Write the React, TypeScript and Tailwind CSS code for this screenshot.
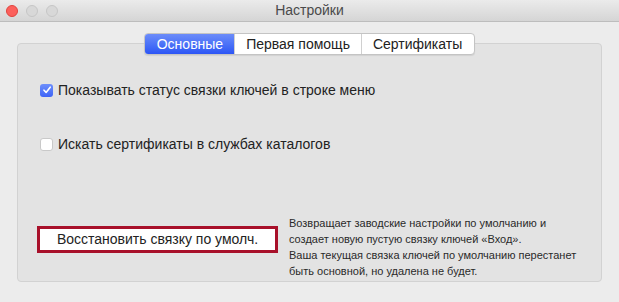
import React from "react";

const font = { fontFamily: '"Liberation Sans", Arial, sans-serif' };

function TrafficLights() {
  return (
    <div className="flex items-center gap-[8px] pl-[6px]">
      <span className="h-[12px] w-[12px] rounded-full border border-[#e0443e] bg-[#fc605c]" />
      <span className="h-[12px] w-[12px] rounded-full border border-[#c6c6c6] bg-[#d8d8d8]" />
      <span className="h-[12px] w-[12px] rounded-full border border-[#c6c6c6] bg-[#d8d8d8]" />
    </div>
  );
}

function Tabs() {
  const tabs = ["Основные", "Первая помощь", "Сертификаты"];
  return (
    <div className="relative z-10 flex h-[22px] overflow-hidden rounded-[4px] border border-[#c4c4c4] bg-white text-[14px] text-[#222] shadow-[0_1px_1px_rgba(0,0,0,0.08)]">
      {tabs.map((t, i) => (
        <div
          key={t}
          className={
            i === 0
              ? "flex items-center bg-gradient-to-b from-[#6c8cf9] to-[#2d55f5] pl-[12px] pr-[11px] text-white"
              : i === 2
                ? "flex items-center border-l border-[#d0d0d0] pl-[11px] pr-[12px]"
                : "flex items-center border-l border-[#d0d0d0] px-[11px]"
          }
        >
          {t}
        </div>
      ))}
    </div>
  );
}

function Check({ checked, label }: { checked?: boolean; label: string }) {
  return (
    <div className="flex h-[16px] items-center gap-[5px] text-[14px] text-[#222]">
      {checked ? (
        <span className="flex h-[13px] w-[13px] items-center justify-center rounded-[3px] bg-gradient-to-b from-[#6e8ffb] to-[#3f63f6]">
          <svg width="10" height="10" viewBox="0 0 10 10">
            <path d="M2 5.2 L4.1 7.4 L8.2 2.2" fill="none" stroke="white" strokeWidth="1.6" strokeLinecap="round" strokeLinejoin="round" />
          </svg>
        </span>
      ) : (
        <span className="h-[13px] w-[13px] rounded-[3px] border border-[#c9c9c9] bg-white" />
      )}
      <span>{label}</span>
    </div>
  );
}

export default function App() {
  return (
    <div className="flex h-[302px] w-[619px] flex-col bg-[#ececec]" style={font}>
      <div className="relative flex h-[22px] items-center border-b border-[#bdbdbd] bg-gradient-to-b from-[#ebebeb] to-[#d5d5d5]">
        <TrafficLights />
        <div className="absolute inset-0 flex items-center justify-center text-[14px] text-[#4a4a4a]">
          Настройки
        </div>
      </div>
      <div className="flex flex-1 flex-col px-[17px] pb-[20px] pt-[11px]">
        <div className="flex justify-center">
          <Tabs />
        </div>
        <div className="-mt-[12px] flex flex-1 flex-col rounded-[4px] border border-[#d2d2d2] bg-[#e3e3e3] pl-[22px] pr-[10px]">
          <div className="pt-[38px]">
            <Check checked label="Показывать статус связки ключей в строке меню" />
          </div>
          <div className="pt-[38px]">
            <Check label="Искать сертификаты в службах каталогов" />
          </div>
          <div className="mt-auto flex items-end gap-[11px] pb-[2px]">
            <div className="-ml-[3px] mb-[26px] flex h-[27px] w-[241px] items-center justify-center border-[3px] border-[#a8102a] bg-white text-[14px] text-[#222]">
              Восстановить связку по умолч.
            </div>
            <div className="text-[11px] leading-[16px] text-[#2a2a2a]">
              Возвращает заводские настройки по умолчанию и
              <br />
              создает новую пустую связку ключей «Вход».
              <br />
              Ваша текущая связка ключей по умолчанию перестанет
              <br />
              быть основной, но удалена не будет.
            </div>
          </div>
        </div>
      </div>
    </div>
  );
}
